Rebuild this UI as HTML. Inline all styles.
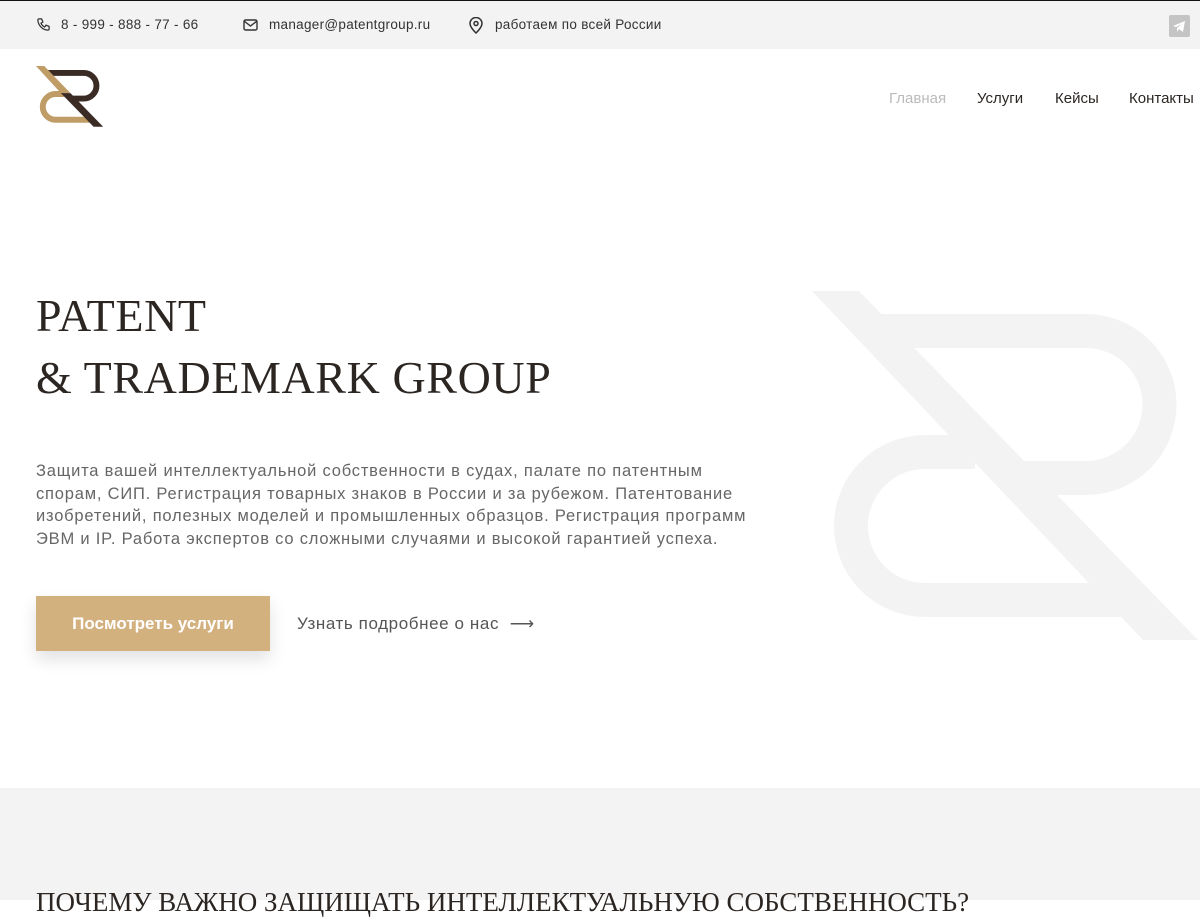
<!DOCTYPE html>
<html><head><meta charset="utf-8"><style>
*{margin:0;padding:0;box-sizing:border-box}
body{width:1200px;height:900px;overflow:hidden;background:#fff;font-family:"Liberation Sans",sans-serif;color:#2c2623;position:relative}
.top{position:absolute;left:0;top:0;width:1200px;height:49px;background:#f3f3f3;border-top:1px solid #111;font-size:13.5px;color:#333;letter-spacing:0.3px}
.top span{position:absolute;top:16px;white-space:nowrap}
.tg{position:absolute;left:1169px;top:14px;width:21px;height:22px;background:#c4c4c4;border-radius:2px}
.nav{position:absolute;top:90px;font-size:15px;color:#2c2623}
h1{position:absolute;left:36px;top:285px;font-family:"Liberation Serif",serif;font-weight:normal;font-size:46px;line-height:62px;color:#2c2623;letter-spacing:0.6px}
.desc{position:absolute;left:36px;top:460px;font-size:16.5px;line-height:22.5px;color:#666;white-space:nowrap;letter-spacing:0.8px}
.btn{position:absolute;left:36px;top:596px;width:234px;height:55px;background:#d3b17f;color:#fff;font-weight:bold;font-size:17px;text-align:center;line-height:55px;box-shadow:0 8px 16px rgba(0,0,0,0.12)}
.more{position:absolute;left:297px;top:614px;font-size:17px;color:#555;letter-spacing:0.6px}
.grey{position:absolute;left:0;top:788px;width:1200px;height:112px;background:#f3f3f3}
.h2{position:absolute;left:36px;top:887px;font-family:"Liberation Serif",serif;font-size:27px;color:#2c2623;white-space:nowrap}
</style></head><body>
<div class="top">
<svg style="position:absolute;left:36px;top:16px" width="15" height="15" viewBox="0 0 24 24" fill="none" stroke="#333" stroke-width="2"><path d="M5 3h4l2 5-3 2a12 12 0 0 0 6 6l2-3 5 2v4a2 2 0 0 1-2 2A17 17 0 0 1 3 5a2 2 0 0 1 2-2"/></svg>
<span style="left:61px">8 - 999 - 888 - 77 - 66</span>
<svg style="position:absolute;left:243px;top:18px" width="15" height="12" viewBox="0 0 15 12" fill="none" stroke="#333" stroke-width="1.4"><rect x="1" y="1" width="13" height="10" rx="1.5"/><path d="M1 2l6.5 5L14 2"/></svg>
<span style="left:269px">manager@patentgroup.ru</span>
<svg style="position:absolute;left:469px;top:16px" width="14" height="17" viewBox="0 0 14 17" fill="none" stroke="#333" stroke-width="1.5"><path d="M7 16s6-5.5 6-9.5A6 6 0 0 0 1 6.5C1 10.5 7 16 7 16z"/><circle cx="7" cy="6.5" r="2"/></svg>
<span style="left:495px">работаем по всей России</span>
<div class="tg"><svg width="21" height="22" viewBox="0 0 21 22"><path d="M4 11l12-5-2 11-4-3-2 3v-4l5-4-6 3z" fill="#fff"/></svg></div>
</div>
<svg style="position:absolute;left:0;top:0" width="1200" height="900">
<g fill="none" stroke="#f3f3f3" stroke-width="34">
<path d="M880 331H1086A73.5 73.5 0 0 1 1086 478H1010"/>
<path d="M975 452H925A74 74 0 0 0 925 600H1130"/>
</g>
<polygon points="812,291 859,291 1198,640 1143,640" fill="#f3f3f3"/>
<g transform="translate(36,66) scale(0.174) translate(-812,-291)">
<path d="M880 331H1086A73.5 73.5 0 0 1 1086 478H1010" fill="none" stroke="#3a2c25" stroke-width="34"/>
<path d="M975 452H925A74 74 0 0 0 925 600H1130" fill="none" stroke="#c09c67" stroke-width="34"/>
<polygon points="812,291 859,291 1010,447 955,447" fill="#c09c67"/>
<polygon points="955,447 1010,447 1198,640 1143,640" fill="#3a2c25"/>
</g>
</svg>
<span class="nav" style="left:889px;color:#bbb">Главная</span>
<span class="nav" style="left:977px">Услуги</span>
<span class="nav" style="left:1055px">Кейсы</span>
<span class="nav" style="left:1129px">Контакты</span>
<h1>PATENT<br>&amp; TRADEMARK GROUP</h1>
<div class="desc">Защита вашей интеллектуальной собственности в судах, палате по патентным<br>спорам, СИП. Регистрация товарных знаков в России и за рубежом. Патентование<br>изобретений, полезных моделей и промышленных образцов. Регистрация программ<br>ЭВМ и IP. Работа экспертов со сложными случаями и высокой гарантией успеха.</div>
<div class="btn">Посмотреть услуги</div>
<div class="more">Узнать подробнее о нас &nbsp;⟶</div>
<div class="grey"></div>
<div class="h2">ПОЧЕМУ ВАЖНО ЗАЩИЩАТЬ ИНТЕЛЛЕКТУАЛЬНУЮ СОБСТВЕННОСТЬ?</div>
</body></html>
